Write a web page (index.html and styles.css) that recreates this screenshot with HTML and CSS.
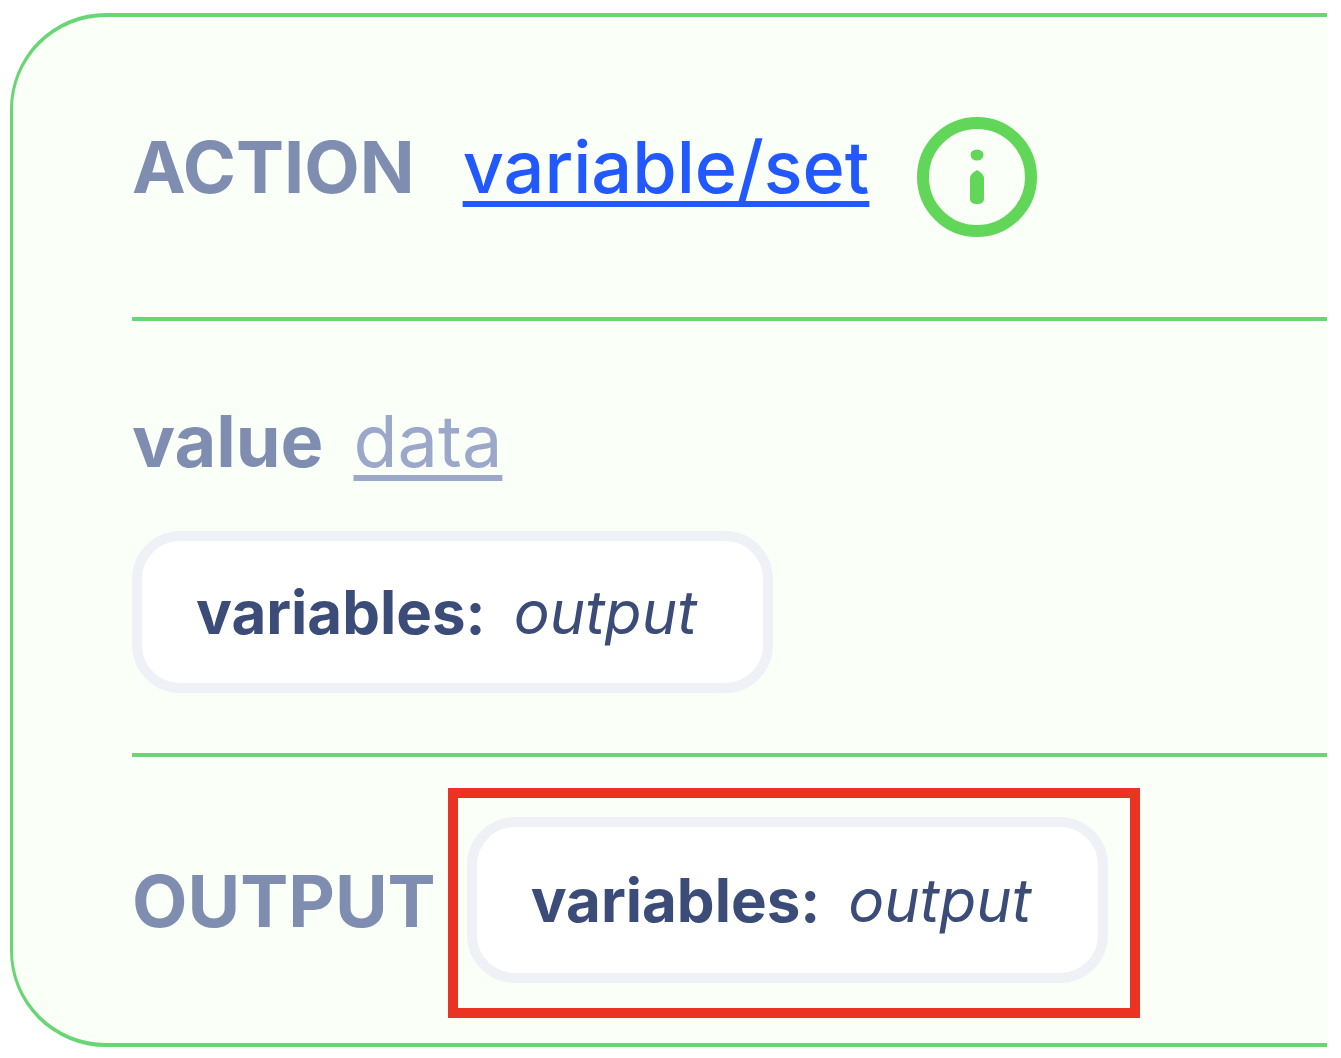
FILE: index.html
```html
<!DOCTYPE html>
<html lang="en">
<head>
<meta charset="utf-8">
<title>Action: variable/set</title>
<link rel="stylesheet" href="styles.css">
</head>
<body>
<main class="card">
  <header class="section section-action">
    <h1 class="label">ACTION</h1>
    <a class="action-link" href="#variable-set">variable/set</a>
    <button class="info" type="button" aria-label="About this action">
      <svg class="info-icon" viewBox="0 0 120 120" aria-hidden="true">
        <circle cx="60" cy="60" r="54" fill="none" stroke="currentColor" stroke-width="12"/>
        <ellipse cx="60" cy="38" rx="6.5" ry="5.5" fill="currentColor"/>
        <path d="M53 61Q53 57 60 53Q67 57 67 61V82Q67 87 60 87Q53 87 53 82Z" fill="currentColor"/>
      </svg>
    </button>
  </header>
  <section class="section section-value">
    <div class="field">
      <h2 class="label">value</h2>
      <a class="type-link" href="#data">data</a>
    </div>
    <div class="chip"><strong class="chip-key">variables:</strong><em class="chip-name">output</em></div>
  </section>
  <section class="section section-output">
    <h2 class="label">OUTPUT</h2>
    <div class="highlight">
      <div class="chip chip-tall"><strong class="chip-key">variables:</strong><em class="chip-name">output</em></div>
    </div>
  </section>
</main>
</body>
</html>
```
FILE: styles.css
```css
* {
  box-sizing: border-box;
}

body {
  margin: 0;
  padding: 13px 14px 10px 10px;
  background: #fff;
  font-family: Inter, "Liberation Sans", sans-serif;
  font-optical-sizing: none;
}

.card {
  padding-left: 119px;
  border: 4px solid #69d675;
  border-right: 0;
  border-left-width: 3px;
  border-radius: 96px 0 0 96px;
  background: #fafff8;
}

.section {
  display: flex;
}

.section + .section {
  border-top: 4px solid #69d675;
}

.label,
.action-link,
.type-link {
  margin: 0;
  font-size: 72px;
  line-height: 88px;
}

.label {
  color: #7f8eb0;
  font-weight: 700;
}

.section-action {
  padding: 100px 0 80px;
}

.section-action .label,
.action-link {
  padding-top: 6px;
}

.action-link {
  margin-left: 48px;
  color: #2158ff;
  font-weight: 500;
  text-decoration-thickness: 6px;
  text-underline-offset: 8px;
  text-decoration-skip-ink: none;
}

.info {
  width: 120px;
  height: 120px;
  margin-left: 48px;
  padding: 0;
  border: 0;
  background: none;
  color: #62d658;
}

.info-icon {
  display: block;
  width: 100%;
}

.section-value {
  flex-direction: column;
  align-items: flex-start;
  gap: 46px;
  padding: 76px 0 60px;
}

.field {
  display: flex;
  gap: 30px;
}

.type-link {
  color: #9ca8c9;
  text-decoration-thickness: 6px;
  text-underline-offset: 8px;
}

.chip {
  display: flex;
  align-items: center;
  gap: 28px;
  padding: 36px 66px 36px 54px;
  border: 10px solid #f0f1f7;
  border-radius: 48px;
  background: #fff;
  color: #3b4c78;
  font-size: 60px;
  line-height: 70px;
}

.chip-tall {
  padding-top: 38px;
  padding-bottom: 38px;
}

.chip-name {
  font-weight: 400;
}

.section-output {
  align-items: center;
  gap: 12px;
  padding: 31px 0 25px;
}

.section-output .label {
  padding-bottom: 4px;
}

.highlight {
  padding: 19px 22px 25px 9px;
  border: 10px solid #ea3323;
}
```
